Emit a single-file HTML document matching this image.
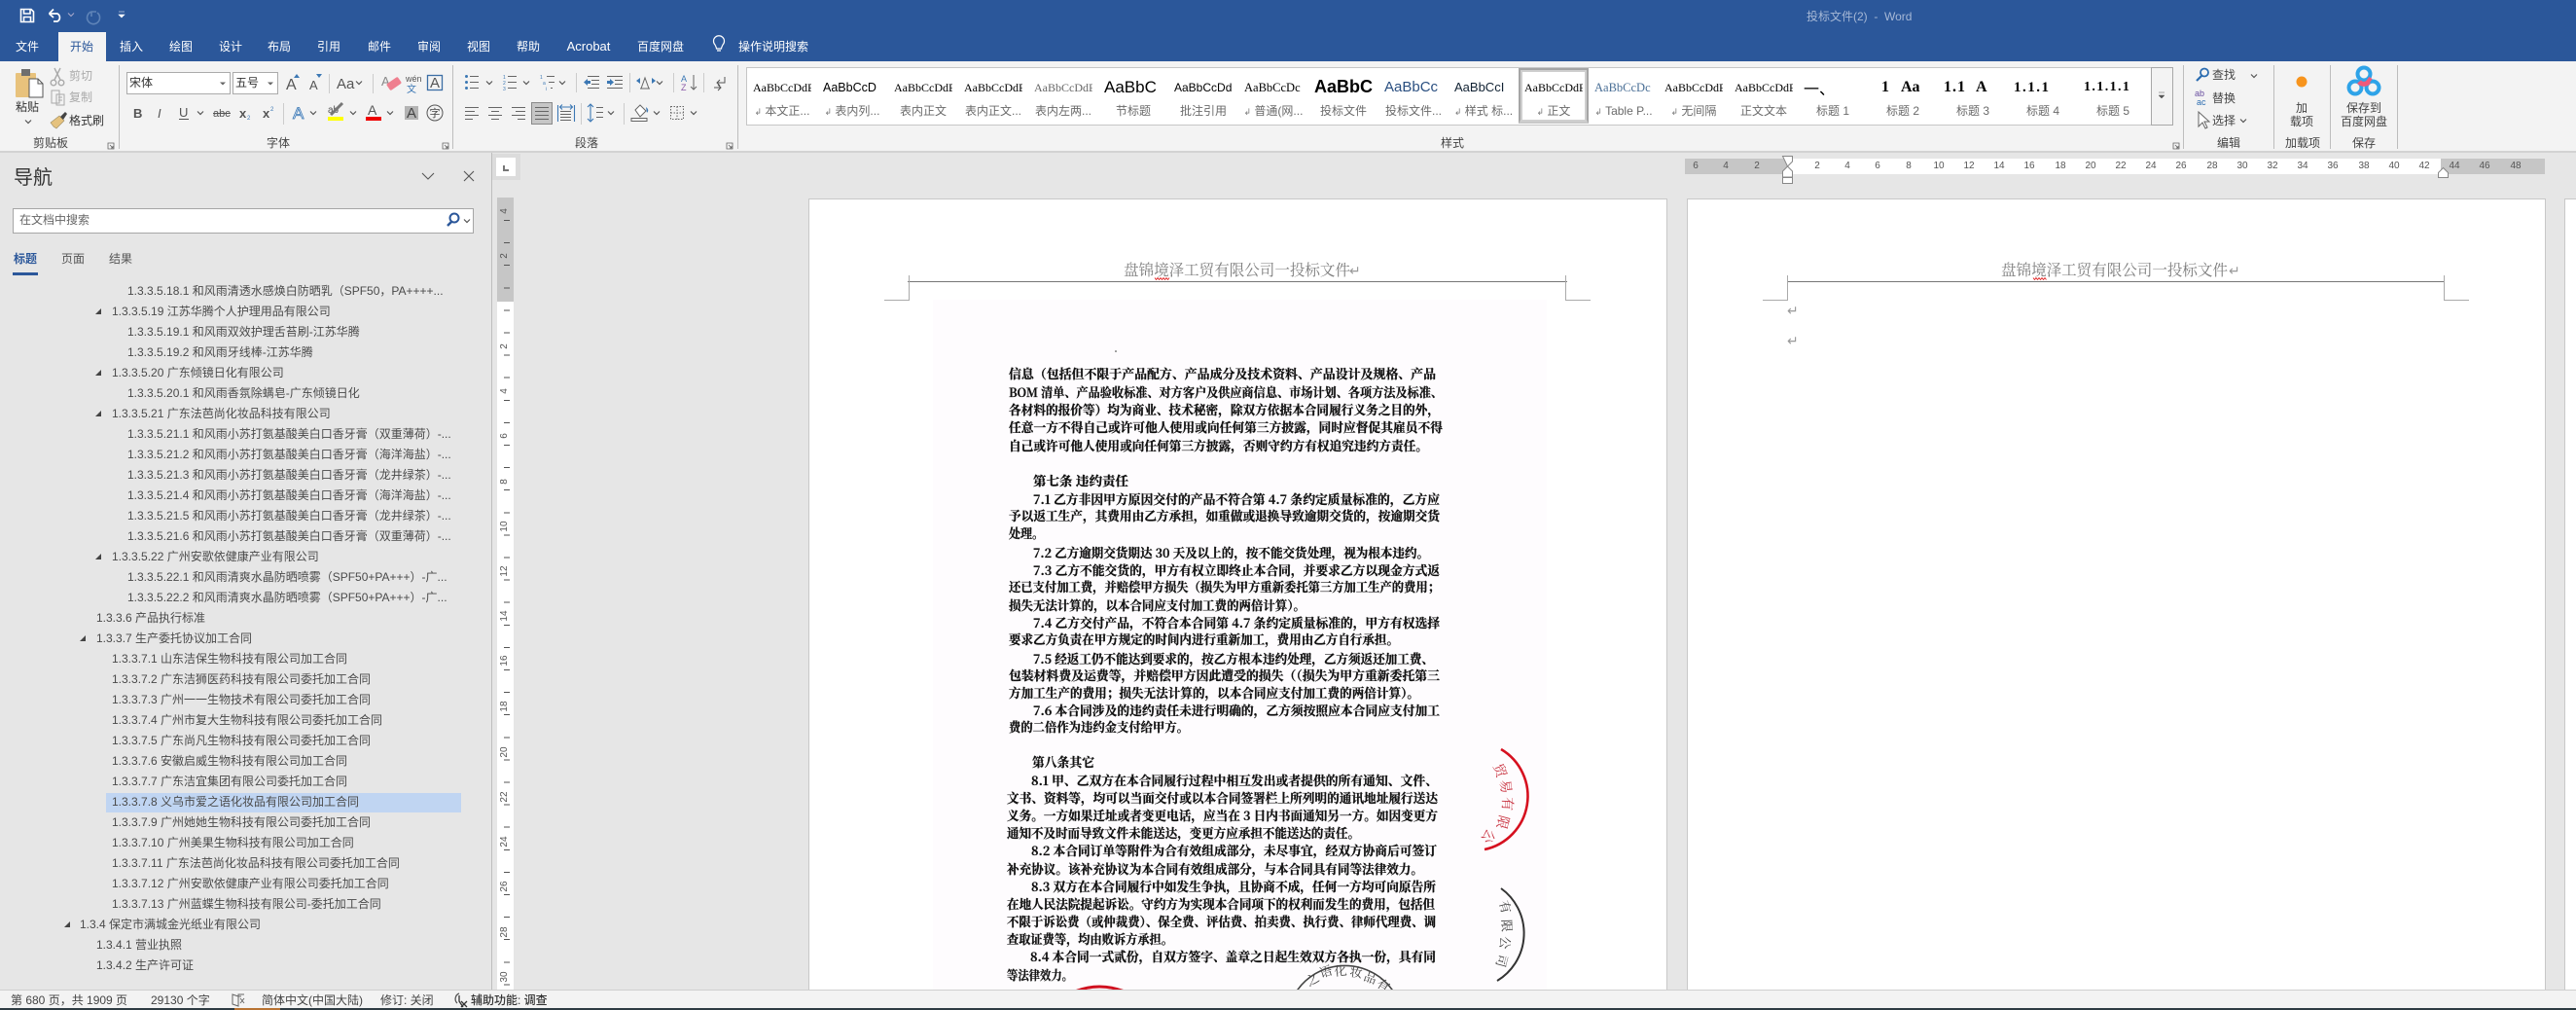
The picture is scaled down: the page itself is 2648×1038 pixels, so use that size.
<!DOCTYPE html>
<html lang="zh-CN"><head><meta charset="utf-8"><title>投标文件(2) - Word</title>
<style>
html,body{margin:0;padding:0;width:2648px;height:1038px;overflow:hidden;background:#e6e6e6;font-family:"Liberation Sans","Noto Sans CJK SC",sans-serif;color:#444}
div,span{position:absolute;box-sizing:border-box}
.t{white-space:nowrap;line-height:14px;font-size:12px}
.c{transform:translateX(-50%)}
.w{color:#fff}
.g{color:#aaa}
.n{white-space:nowrap;line-height:21px;font-size:12px;color:#4a4a4a}
.s{width:60px;height:22px;overflow:hidden;top:79px;white-space:nowrap;line-height:22px;font-family:"Liberation Serif","Noto Serif CJK SC",serif;font-size:12px;color:#000;text-align:left}
.l{top:107px;width:66px;text-align:center;font-size:12px;line-height:14px;color:#6a6a6a;white-space:nowrap}
.a{font-family:"DejaVu Sans",sans-serif;font-size:9px;color:#777}
.rn{font-size:10px;line-height:12px;color:#555;top:165px;transform:translateX(-50%)}
.vn{font-size:10px;line-height:12px;color:#555;left:513px;width:12px;text-align:center;transform:rotate(-90deg)}
.sep{width:1px;top:67px;height:86px;background:#bdbdbd}
svg{position:absolute;left:0;top:0}
</style></head><body>
<div style="left:0;top:0;width:2648px;height:63px;background:#2b579a"></div>
<div style="left:0;top:63px;width:2648px;height:94px;background:#f3f3f3;border-bottom:2px solid #d2d2d2"></div>
<div style="left:60px;top:33px;width:49px;height:30px;background:#f3f3f3"></div>
<span class="t" style="left:1857px;top:10px;color:#a6b8d6">投标文件(2)&nbsp; -&nbsp; Word</span>
<span class="t w c" style="left:28px;top:41px">文件</span>
<span class="t c" style="left:84px;top:41px;color:#2b579a">开始</span>
<span class="t w c" style="left:135px;top:41px">插入</span>
<span class="t w c" style="left:186px;top:41px">绘图</span>
<span class="t w c" style="left:237px;top:41px">设计</span>
<span class="t w c" style="left:287px;top:41px">布局</span>
<span class="t w c" style="left:338px;top:41px">引用</span>
<span class="t w c" style="left:390px;top:41px">邮件</span>
<span class="t w c" style="left:441px;top:41px">审阅</span>
<span class="t w c" style="left:492px;top:41px">视图</span>
<span class="t w c" style="left:543px;top:41px">帮助</span>
<span class="t w c" style="left:605px;top:41px;font-size:13px">Acrobat</span>
<span class="t w c" style="left:679px;top:41px">百度网盘</span>
<span class="t w" style="left:759px;top:41px">操作说明搜索</span>

<!-- ribbon groups -->
<div class="sep" style="left:122px"></div><div class="sep" style="left:465px"></div><div class="sep" style="left:758px"></div>
<div class="sep" style="left:2244px"></div><div class="sep" style="left:2337px"></div><div class="sep" style="left:2395px"></div><div class="sep" style="left:2464px"></div>
<span class="t c" style="left:28px;top:103px;color:#333">粘贴</span>
<span class="t g" style="left:71px;top:71px">剪切</span>
<span class="t g" style="left:71px;top:93px">复制</span>
<span class="t" style="left:71px;top:117px;color:#333">格式刷</span>
<span class="t c" style="left:52px;top:140px">剪贴板</span>
<div style="left:130px;top:74px;width:107px;height:23px;background:#fff;border:1px solid #ababab"></div>
<div style="left:239px;top:74px;width:47px;height:23px;background:#fff;border:1px solid #ababab"></div>
<span class="t" style="left:133px;top:78px;color:#333">宋体</span>
<span class="t" style="left:242px;top:78px;color:#333">五号</span>
<span class="t c" style="left:286px;top:140px">字体</span>
<span class="t c" style="left:603px;top:140px">段落</span>
<span class="t c" style="left:1493px;top:140px">样式</span>
<span class="t c" style="left:2291px;top:140px">编辑</span>
<span class="t c" style="left:2367px;top:140px">加载项</span>
<span class="t c" style="left:2430px;top:140px">保存</span>
<span class="t" style="left:2274px;top:70px">查找</span>
<span class="t" style="left:2274px;top:94px">替换</span>
<span class="t" style="left:2274px;top:117px">选择</span>
<span class="t c" style="left:2366px;top:104px">加</span>
<span class="t c" style="left:2366px;top:118px">载项</span>
<span class="t c" style="left:2430px;top:104px">保存到</span>
<span class="t c" style="left:2430px;top:118px">百度网盘</span>

<!-- style gallery -->
<div style="left:767px;top:69px;width:1467px;height:60px;background:#fff;border:1px solid #c6c6c6"></div>
<div style="left:2211px;top:69px;width:23px;height:60px;background:#f3f3f3;border:1px solid #a8a8a8"></div>
<div style="left:1561px;top:70px;width:72px;height:57px;background:#fff;border:2px solid #a5a5a5;border-bottom:4px solid #c8c8c8;outline:2px solid #cfcfcf;outline-offset:-4px"></div>
<div class="s" style="left:774px">AaBbCcDdE</div>
<div class="s" style="left:846px;font-family:'Liberation Sans';font-size:12.5px">AaBbCcD</div>
<div class="s" style="left:919px">AaBbCcDdE</div>
<div class="s" style="left:991px">AaBbCcDdE</div>
<div class="s" style="left:1063px;color:#666">AaBbCcDdEe</div>
<div class="s" style="left:1135px;font-family:'Liberation Sans';font-size:17px;height:24px">AaBbC</div>
<div class="s" style="left:1207px;font-family:'Liberation Sans';font-size:12px">AaBbCcDd</div>
<div class="s" style="left:1279px;font-size:12.5px">AaBbCcDc</div>
<div class="s" style="left:1351px;font-family:'Liberation Sans';font-weight:bold;font-size:18px;height:26px;top:78px">AaBbC</div>
<div class="s" style="left:1423px;font-family:'Liberation Sans';font-size:15px;color:#2a4f80;height:24px">AaBbCc</div>
<div class="s" style="left:1495px;font-family:'Liberation Sans';font-size:13px;color:#123">AaBbCcI</div>
<div class="s" style="left:1567px">AaBbCcDdE</div>
<div class="s" style="left:1639px;font-size:12.5px;color:#4a6f96">AaBbCcDc</div>
<div class="s" style="left:1711px">AaBbCcDdE</div>
<div class="s" style="left:1783px">AaBbCcDdE</div>
<div class="s" style="left:1854px;font-size:16px;font-family:'Noto Sans CJK SC'">一、</div>
<div class="s" style="left:1926px;font-size:16px;font-weight:bold;height:24px">&nbsp;&nbsp;1&nbsp;&nbsp;&nbsp;Aa</div>
<div class="s" style="left:1998px;font-size:16px;font-weight:bold;letter-spacing:1px;height:24px">1.1 &nbsp;A</div>
<div class="s" style="left:2070px;font-size:15px;font-weight:bold;letter-spacing:1.5px;height:24px">1.1.1</div>
<div class="s" style="left:2142px;font-size:14px;font-weight:bold;letter-spacing:1.4px;height:24px">1.1.1.1</div>
<div class="l" style="left:771px"><span class="a" style="position:static">↲</span> 本文正...</div>
<div class="l" style="left:843px"><span class="a" style="position:static">↲</span> 表内列...</div>
<div class="l" style="left:916px">表内正文</div>
<div class="l" style="left:988px">表内正文...</div>
<div class="l" style="left:1060px">表内左两...</div>
<div class="l" style="left:1132px">节标题</div>
<div class="l" style="left:1204px">批注引用</div>
<div class="l" style="left:1276px"><span class="a" style="position:static">↲</span> 普通(网...</div>
<div class="l" style="left:1348px">投标文件</div>
<div class="l" style="left:1420px">投标文件...</div>
<div class="l" style="left:1492px"><span class="a" style="position:static">↲</span> 样式 标...</div>
<div class="l" style="left:1564px"><span class="a" style="position:static">↲</span> 正文</div>
<div class="l" style="left:1636px"><span class="a" style="position:static">↲</span> Table P...</div>
<div class="l" style="left:1708px"><span class="a" style="position:static">↲</span> 无间隔</div>
<div class="l" style="left:1780px">正文文本</div>
<div class="l" style="left:1851px">标题 1</div>
<div class="l" style="left:1923px">标题 2</div>
<div class="l" style="left:1995px">标题 3</div>
<div class="l" style="left:2067px">标题 4</div>
<div class="l" style="left:2139px">标题 5</div>

<!-- nav pane -->
<div style="left:505px;top:157px;width:1px;height:860px;background:#bdbdbd"></div>
<span class="t" style="left:14px;top:171px;font-size:20px;line-height:24px;color:#333">导航</span>
<div style="left:13px;top:214px;width:474px;height:26px;background:#fff;border:1px solid #a6a6a6"></div>
<span class="t" style="left:20px;top:219px;color:#666">在文档中搜索</span>
<span class="t" style="left:14px;top:259px;color:#2b579a;font-weight:bold">标题</span>
<span class="t" style="left:63px;top:259px;color:#555">页面</span>
<span class="t" style="left:112px;top:259px;color:#555">结果</span>
<div style="left:13px;top:280px;width:26px;height:3px;background:#2b579a"></div>
<div style="left:109px;top:815px;width:365px;height:20px;background:#c0d5f2"></div>
<span class="n" style="left:131px;top:289px">1.3.3.5.18.1 和风雨清透水感焕白防晒乳（SPF50，PA++++...</span>
<span class="n" style="left:115px;top:310px">1.3.3.5.19 江苏华腾个人护理用品有限公司</span>
<span class="n" style="left:131px;top:331px">1.3.3.5.19.1 和风雨双效护理舌苔刷-江苏华腾</span>
<span class="n" style="left:131px;top:352px">1.3.3.5.19.2 和风雨牙线棒-江苏华腾</span>
<span class="n" style="left:115px;top:373px">1.3.3.5.20 广东倾镜日化有限公司</span>
<span class="n" style="left:131px;top:394px">1.3.3.5.20.1 和风雨香氛除螨皂-广东倾镜日化</span>
<span class="n" style="left:115px;top:415px">1.3.3.5.21 广东法芭尚化妆品科技有限公司</span>
<span class="n" style="left:131px;top:436px">1.3.3.5.21.1 和风雨小苏打氨基酸美白口香牙膏（双重薄荷）-...</span>
<span class="n" style="left:131px;top:457px">1.3.3.5.21.2 和风雨小苏打氨基酸美白口香牙膏（海洋海盐）-...</span>
<span class="n" style="left:131px;top:478px">1.3.3.5.21.3 和风雨小苏打氨基酸美白口香牙膏（龙井绿茶）-...</span>
<span class="n" style="left:131px;top:499px">1.3.3.5.21.4 和风雨小苏打氨基酸美白口香牙膏（海洋海盐）-...</span>
<span class="n" style="left:131px;top:520px">1.3.3.5.21.5 和风雨小苏打氨基酸美白口香牙膏（龙井绿茶）-...</span>
<span class="n" style="left:131px;top:541px">1.3.3.5.21.6 和风雨小苏打氨基酸美白口香牙膏（双重薄荷）-...</span>
<span class="n" style="left:115px;top:562px">1.3.3.5.22 广州安歌依健康产业有限公司</span>
<span class="n" style="left:131px;top:583px">1.3.3.5.22.1 和风雨清爽水晶防晒喷雾（SPF50+PA+++）-广...</span>
<span class="n" style="left:131px;top:604px">1.3.3.5.22.2 和风雨清爽水晶防晒喷雾（SPF50+PA+++）-广...</span>
<span class="n" style="left:99px;top:625px">1.3.3.6 产品执行标准</span>
<span class="n" style="left:99px;top:646px">1.3.3.7 生产委托协议加工合同</span>
<span class="n" style="left:115px;top:667px">1.3.3.7.1 山东洁保生物科技有限公司加工合同</span>
<span class="n" style="left:115px;top:688px">1.3.3.7.2 广东洁狮医药科技有限公司委托加工合同</span>
<span class="n" style="left:115px;top:709px">1.3.3.7.3 广州一一生物技术有限公司委托加工合同</span>
<span class="n" style="left:115px;top:730px">1.3.3.7.4 广州市复大生物科技有限公司委托加工合同</span>
<span class="n" style="left:115px;top:751px">1.3.3.7.5 广东尚凡生物科技有限公司委托加工合同</span>
<span class="n" style="left:115px;top:772px">1.3.3.7.6 安徽启威生物科技有限公司加工合同</span>
<span class="n" style="left:115px;top:793px">1.3.3.7.7 广东洁宜集团有限公司委托加工合同</span>
<span class="n" style="left:115px;top:814px">1.3.3.7.8 义乌市爱之语化妆品有限公司加工合同</span>
<span class="n" style="left:115px;top:835px">1.3.3.7.9 广州她她生物科技有限公司委托加工合同</span>
<span class="n" style="left:115px;top:856px">1.3.3.7.10 广州美果生物科技有限公司加工合同</span>
<span class="n" style="left:115px;top:877px">1.3.3.7.11 广东法芭尚化妆品科技有限公司委托加工合同</span>
<span class="n" style="left:115px;top:898px">1.3.3.7.12 广州安歌依健康产业有限公司委托加工合同</span>
<span class="n" style="left:115px;top:919px">1.3.3.7.13 广州蓝蝶生物科技有限公司-委托加工合同</span>
<span class="n" style="left:82px;top:940px">1.3.4 保定市满城金光纸业有限公司</span>
<span class="n" style="left:99px;top:961px">1.3.4.1 营业执照</span>
<span class="n" style="left:99px;top:982px">1.3.4.2 生产许可证</span>

<!-- rulers -->
<div style="left:506px;top:158px;width:29px;height:27px;background:#dcdcdc"></div>
<div style="left:510px;top:162px;width:20px;height:19px;background:#fff"></div>
<div style="left:517px;top:170px;width:2px;height:6px;background:#777"></div><div style="left:517px;top:174px;width:6px;height:2px;background:#777"></div>
<div style="left:511px;top:203px;width:17px;height:107px;background:#c6c6c6"></div>
<div style="left:511px;top:310px;width:17px;height:707px;background:#fff"></div>
<div style="left:518px;top:226px;width:6px;height:791px;background:repeating-linear-gradient(to bottom,#555 0,#555 1px,transparent 1px,transparent 23.1px)"></div>
<span class="vn" style="top:211px">4</span><span class="vn" style="top:257px">2</span>
<span class="vn" style="top:350px">2</span><span class="vn" style="top:396px">4</span><span class="vn" style="top:442px">6</span><span class="vn" style="top:489px">8</span><span class="vn" style="top:535px">10</span><span class="vn" style="top:581px">12</span><span class="vn" style="top:627px">14</span><span class="vn" style="top:673px">16</span><span class="vn" style="top:720px">18</span><span class="vn" style="top:767px">20</span><span class="vn" style="top:813px">22</span><span class="vn" style="top:859px">24</span><span class="vn" style="top:905px">26</span><span class="vn" style="top:952px">28</span><span class="vn" style="top:998px">30</span>

<div style="left:1732px;top:163px;width:884px;height:16px;background:#c6c6c6"></div>
<div style="left:1837px;top:163px;width:672px;height:16px;background:#fff"></div>
<span class="rn" style="left:1743px">6</span><span class="rn" style="left:1774px">4</span><span class="rn" style="left:1806px">2</span>
<span class="rn" style="left:1868px">2</span><span class="rn" style="left:1899px">4</span><span class="rn" style="left:1930px">6</span><span class="rn" style="left:1962px">8</span><span class="rn" style="left:1993px">10</span><span class="rn" style="left:2024px">12</span><span class="rn" style="left:2055px">14</span><span class="rn" style="left:2086px">16</span><span class="rn" style="left:2118px">18</span><span class="rn" style="left:2149px">20</span><span class="rn" style="left:2180px">22</span><span class="rn" style="left:2211px">24</span><span class="rn" style="left:2242px">26</span><span class="rn" style="left:2274px">28</span><span class="rn" style="left:2305px">30</span><span class="rn" style="left:2336px">32</span><span class="rn" style="left:2367px">34</span><span class="rn" style="left:2398px">36</span><span class="rn" style="left:2430px">38</span><span class="rn" style="left:2461px">40</span><span class="rn" style="left:2492px">42</span>
<span class="rn" style="left:2523px">44</span><span class="rn" style="left:2554px">46</span><span class="rn" style="left:2586px">48</span>

<!-- pages -->
<div style="left:831px;top:204px;width:883px;height:813px;background:#fff;border:1px solid #c8c8c8;border-bottom:0;overflow:hidden">
 <div style="left:127px;top:103px;width:631px;height:710px;background:#fefcfe"></div>
 <svg width="2648" height="1038" viewBox="0 0 2648 1038" style="left:-832px;top:-205px" font-family="'Noto Serif CJK SC',serif" font-size="13" font-weight="700" fill="#111" stroke="#111" stroke-width=".3">
  <text x="1037" y="389" textLength="439" lengthAdjust="spacingAndGlyphs">信息（包括但不限于产品配方、产品成分及技术资料、产品设计及规格、产品</text>
  <text x="1037" y="408" textLength="446" lengthAdjust="spacingAndGlyphs">BOM 清单、产品验收标准、对方客户及供应商信息、市场计划、各项方法及标准、</text>
  <text x="1037" y="426" textLength="443" lengthAdjust="spacingAndGlyphs">各材料的报价等）均为商业、技术秘密，除双方依据本合同履行义务之目的外，</text>
  <text x="1037" y="444" textLength="446" lengthAdjust="spacingAndGlyphs">任意一方不得自己或许可他人使用或向任何第三方披露，同时应督促其雇员不得</text>
  <text x="1037" y="463" textLength="431" lengthAdjust="spacingAndGlyphs">自己或许可他人使用或向任何第三方披露，否则守约方有权追究违约方责任。</text>
  <text x="1062" y="499" textLength="98" lengthAdjust="spacingAndGlyphs">第七条 违约责任</text>
  <text x="1062" y="518" textLength="418" lengthAdjust="spacingAndGlyphs">7.1 乙方非因甲方原因交付的产品不符合第 4.7 条约定质量标准的，乙方应</text>
  <text x="1037" y="535" textLength="443" lengthAdjust="spacingAndGlyphs">予以返工生产，其费用由乙方承担，如重做或退换导致逾期交货的，按逾期交货</text>
  <text x="1037" y="553" textLength="36" lengthAdjust="spacingAndGlyphs">处理。</text>
  <text x="1062" y="573" textLength="407" lengthAdjust="spacingAndGlyphs">7.2 乙方逾期交货期达 30 天及以上的，按不能交货处理，视为根本违约。</text>
  <text x="1062" y="591" textLength="418" lengthAdjust="spacingAndGlyphs">7.3 乙方不能交货的，甲方有权立即终止本合同，并要求乙方以现金方式返</text>
  <text x="1037" y="608" textLength="443" lengthAdjust="spacingAndGlyphs">还已支付加工费，并赔偿甲方损失（损失为甲方重新委托第三方加工生产的费用；</text>
  <text x="1037" y="627" textLength="305" lengthAdjust="spacingAndGlyphs">损失无法计算的，以本合同应支付加工费的两倍计算）。</text>
  <text x="1062" y="645" textLength="418" lengthAdjust="spacingAndGlyphs">7.4 乙方交付产品，不符合本合同第 4.7 条约定质量标准的，甲方有权选择</text>
  <text x="1037" y="662" textLength="401" lengthAdjust="spacingAndGlyphs">要求乙方负责在甲方规定的时间内进行重新加工，费用由乙方自行承担。</text>
  <text x="1062" y="682" textLength="412" lengthAdjust="spacingAndGlyphs">7.5 经返工仍不能达到要求的，按乙方根本违约处理，乙方须返还加工费、</text>
  <text x="1037" y="699" textLength="443" lengthAdjust="spacingAndGlyphs">包装材料费及运费等，并赔偿甲方因此遭受的损失（（损失为甲方重新委托第三</text>
  <text x="1037" y="717" textLength="422" lengthAdjust="spacingAndGlyphs">方加工生产的费用；损失无法计算的，以本合同应支付加工费的两倍计算）。</text>
  <text x="1062" y="735" textLength="418" lengthAdjust="spacingAndGlyphs">7.6 本合同涉及的违约责任未进行明确的，乙方须按照应本合同应支付加工</text>
  <text x="1037" y="752" textLength="185" lengthAdjust="spacingAndGlyphs">费的二倍作为违约金支付给甲方。</text>
  <text x="1061" y="788" textLength="64" lengthAdjust="spacingAndGlyphs">第八条其它</text>
  <text x="1060" y="807" textLength="418" lengthAdjust="spacingAndGlyphs">8.1 甲、乙双方在本合同履行过程中相互发出或者提供的所有通知、文件、</text>
  <text x="1035" y="825" textLength="443" lengthAdjust="spacingAndGlyphs">文书、资料等，均可以当面交付或以本合同签署栏上所列明的通讯地址履行送达</text>
  <text x="1035" y="843" textLength="443" lengthAdjust="spacingAndGlyphs">义务。一方如果迁址或者变更电话，应当在 3 日内书面通知另一方。如因变更方</text>
  <text x="1035" y="861" textLength="363" lengthAdjust="spacingAndGlyphs">通知不及时而导致文件未能送达，变更方应承担不能送达的责任。</text>
  <text x="1060" y="879" textLength="417" lengthAdjust="spacingAndGlyphs">8.2 本合同订单等附件为合有效组成部分，未尽事宜，经双方协商后可签订</text>
  <text x="1035" y="898" textLength="428" lengthAdjust="spacingAndGlyphs">补充协议。该补充协议为本合同有效组成部分，与本合同具有同等法律效力。</text>
  <text x="1060" y="916" textLength="416" lengthAdjust="spacingAndGlyphs">8.3 双方在本合同履行中如发生争执，且协商不成，任何一方均可向原告所</text>
  <text x="1035" y="934" textLength="440" lengthAdjust="spacingAndGlyphs">在地人民法院提起诉讼。守约方为实现本合同项下的权利而发生的费用，包括但</text>
  <text x="1035" y="952" textLength="441" lengthAdjust="spacingAndGlyphs">不限于诉讼费（或仲裁费）、保全费、评估费、拍卖费、执行费、律师代理费、调</text>
  <text x="1035" y="970" textLength="171" lengthAdjust="spacingAndGlyphs">查取证费等，均由败诉方承担。</text>
  <text x="1059" y="988" textLength="417" lengthAdjust="spacingAndGlyphs">8.4 本合同一式贰份，自双方签字、盖章之日起生效双方各执一份，具有同</text>
  <text x="1035" y="1007" textLength="68" lengthAdjust="spacingAndGlyphs">等法律效力。</text>
  <g font-weight="400" stroke="none">
   <path d="M1543 770A56 56 0 0 1 1526 873" fill="none" stroke="#d6101f" stroke-width="2.6"/>
   <g fill="#c8303e" font-size="14">
    <text transform="translate(1535,787) rotate(70)">贸</text>
    <text transform="translate(1542,802) rotate(82)">易</text>
    <text transform="translate(1545,819) rotate(92)">有</text>
    <text transform="translate(1542,837) rotate(105)">限</text>
    <text transform="translate(1530,851) rotate(125)">公</text>
   </g>
   <path d="M1543 913A57 57 0 0 1 1539 1008" fill="none" stroke="#333" stroke-width="2"/>
   <g fill="#444" font-size="13">
    <text transform="translate(1541,927) rotate(75)">有</text>
    <text transform="translate(1544,945) rotate(88)">限</text>
    <text transform="translate(1543,962) rotate(95)">公</text>
    <text transform="translate(1541,980) rotate(105)">司</text>
   </g>
   <path d="M1332 1020A60 60 0 0 1 1433 1020" fill="none" stroke="#444" stroke-width="1.6"/>
   <g fill="#444" font-size="13">
    <text transform="translate(1346,1014) rotate(-32)">之</text>
    <text transform="translate(1358,1005) rotate(-18)">语</text>
    <text transform="translate(1372,1003) rotate(-6)">化</text>
    <text transform="translate(1387,1003) rotate(8)">妆</text>
    <text transform="translate(1401,1007) rotate(20)">品</text>
    <text transform="translate(1414,1013) rotate(32)">有</text>
   </g>
   <path d="M1105 1019Q1130 1009 1156 1019" fill="none" stroke="#d0101f" stroke-width="3"/>
   <circle cx="1147" cy="361" r=".8" fill="#333"/>
  </g>
 </svg>
</div>
<div style="left:1734px;top:204px;width:883px;height:813px;background:#fff;border:1px solid #c8c8c8;border-bottom:0"></div>
<div style="left:2636px;top:204px;width:12px;height:813px;background:#fff;border:1px solid #c8c8c8;border-right:0;border-bottom:0"></div>

<!-- status bar -->
<div style="left:0;top:1017px;width:2648px;height:21px;background:#f3f3f3;border-top:1px solid #cfcfcf"></div>
<div style="left:0;top:1036px;width:2648px;height:2px;background:#2e3b42"></div>
<div style="left:241px;top:1036px;width:47px;height:2px;background:#b87333"></div>
<span class="t" style="left:11px;top:1021px;color:#444">第 680 页，共 1909 页</span>
<span class="t" style="left:155px;top:1021px;color:#444">29130 个字</span>
<span class="t" style="left:269px;top:1021px;color:#444">简体中文(中国大陆)</span>
<span class="t" style="left:391px;top:1021px;color:#444">修订: 关闭</span>
<span class="t" style="left:484px;top:1021px;color:#333;font-weight:500">辅助功能: 调查</span>

<!-- icon overlay -->
<svg width="2648" height="1038" viewBox="0 0 2648 1038" font-family="'Liberation Sans','Noto Sans CJK SC',sans-serif">
 <defs><path id="c" d="M-3-1.5 0 1.5 3-1.5" fill="none" stroke="#555" stroke-width="1.2"/><path id="cw" d="M-3-1.5 0 1.5 3-1.5" fill="none" stroke="#aac" stroke-width="1"/>
 <path id="tri" d="M-6 3H0V-3Z" fill="#444"/><path id="dd" d="M-3-1.5H3L0 1.5Z" fill="#666"/>
 <path id="lau" d="M-3-3H3V3H-3ZM-1-1 2 2M2 0V2H0" fill="none" stroke="#666" stroke-width=".8"/></defs>
 <!-- quick access -->
 <path d="M21.5 9.5H32L34.5 12V22.5H21.5ZM24.5 9.5V14H31V9.5M24.5 22.5V17.5H31.5V22.5" fill="none" stroke="#fff" stroke-width="1.6"/>
 <path d="M50.5 14H59A4.5 4.5 0 0 1 59 22H55M50.5 14 55 9.5M50.5 14 55 18" fill="none" stroke="#fff" stroke-width="1.7"/>
 <use href="#cw" x="73" y="15"/>
 <path d="M94 11A6.5 6.5 0 1 0 100 12M94 11V16M94 11H99" fill="none" stroke="#5f84b8" stroke-width="1.6" transform="translate(0,1)"/>
 <path d="M122 12H128M122 15H128L125 18Z" fill="#fff" stroke="#fff" stroke-width=".6"/>
 <path d="M735 50A5.5 5.5 0 1 1 743 50C742 52 741.500 53 741.500 54H736.500C736.500 53 736 52 735 50ZM737 56H741" fill="none" stroke="#fff" stroke-width="1.2" transform="translate(0,-4)"/>
 <!-- clipboard -->
 <rect x="16" y="75" width="21" height="25" rx="1" fill="#e8c27c"/><rect x="22" y="71" width="9" height="7" fill="#6e6e6e"/>
 <path d="M30 81H39L44 86V100H30Z" fill="#fff" stroke="#555"/><path d="M39 81V86H44" fill="none" stroke="#555"/>
 <use href="#c" x="29" y="125"/>
 <g fill="none" stroke="#aaa" stroke-width="1.4"><circle cx="55" cy="85" r="2.800"/><circle cx="63" cy="85" r="2.800"/><path d="M56 82 62 70M62 82 56 70"/></g>
 <path d="M53 93H61V106H53ZM58 97H66V108H58ZM60 100H64M60 103H64" fill="#f3f3f3" stroke="#aaa"/>
 <path d="M55 130 52 126 61 119 66 124 58 132Z" fill="#e5c27e" stroke="#9a8a60" stroke-width=".6"/><path d="M62 120 67 115 69 117 65 123Z" fill="#444"/>
 <use href="#lau" x="114" y="150"/><use href="#lau" x="458" y="150"/><use href="#lau" x="750" y="150"/><use href="#lau" x="2237" y="150"/>
 <use href="#dd" x="229" y="86"/><use href="#dd" x="278" y="86"/>
 <!-- font row 1 -->
 <g fill="#555">
  <text x="294" y="92" font-size="16">A</text><path d="M302 80 305 76 308 80Z" fill="#3c78b4"/>
  <text x="318" y="92" font-size="13">A</text><path d="M325 76H331L328 80Z" fill="#3c78b4"/>
  <text x="346" y="91" font-size="15">Aa</text>
  <text x="417" y="84" font-size="9">wén</text>
  <text x="418" y="95" font-size="10" fill="#3c78b4">文</text>
  <text x="442" y="90" font-size="15">A</text>
  <text x="392" y="88" font-size="13" fill="#888">A</text>
 </g>
 <rect x="439.500" y="77.500" width="15" height="15" fill="none" stroke="#3c6ea5" stroke-width="1.3"/>
 <rect x="398" y="82" width="14" height="8" rx="1.500" transform="rotate(-35 405 86)" fill="#ef7f8f"/>
 <use href="#c" x="369" y="85"/>
 <rect x="338" y="76" width="1" height="20" fill="#ccc"/><rect x="383" y="76" width="1" height="20" fill="#ccc"/>
 <!-- font row 2 -->
 <g fill="#555" font-size="13">
  <text x="137" y="121" font-weight="bold">B</text><text x="162" y="121" font-style="italic">I</text>
  <text x="184" y="120">U</text><rect x="184" y="122" width="10" height="1" />
  <text x="219" y="120" font-size="11">abc</text><rect x="219" y="116" width="18" height="1"/>
  <text x="246" y="121" font-weight="bold">x</text><text x="254" y="123" font-size="6" fill="#3c78b4">2</text>
  <text x="270" y="121" font-weight="bold">x</text><text x="278" y="114" font-size="6" fill="#3c78b4">2</text>
  <text x="337" y="116" font-size="10">ab</text>
  <text x="378" y="118" font-size="14">A</text>
  <text x="441.500" y="120" font-size="11" fill="#444">字</text>
 </g>
 <use href="#c" x="206" y="116"/><use href="#c" x="322" y="116"/><use href="#c" x="363" y="116"/><use href="#c" x="401" y="116"/>
 <rect x="291" y="106" width="1" height="22" fill="#ccc"/>
 <text x="301" y="122" font-size="17" fill="#e8f0fa" stroke="#3c78b4" stroke-width=".8">A</text>
 <path d="M340 118 352 106" stroke="#777" stroke-width="3"/>
 <rect x="337" y="120" width="16" height="4" fill="#ff0"/><rect x="376" y="120" width="16" height="4" fill="#e00"/>
 <rect x="416" y="109" width="14" height="14" fill="#b3b3b3"/>
 <text x="418" y="121" font-size="15" fill="#444">A</text>
 <circle cx="447" cy="116" r="8" fill="none" stroke="#555"/>
 <!-- paragraph row 1 -->
 <g stroke="#666" stroke-width="1" fill="none">
  <path d="M483 78.500H492M483 84.500H492M483 90.500H492"/>
  <path d="M522 78.500H531M522 84.500H531M522 90.500H531"/>
  <path d="M562 78.500H570M564 84.500H570M566 90.500H568"/>
  <path d="M604 78.500H616M608 82.500H616M608 86.500H616M604 90.500H616"/>
  <path d="M624 78.500H640M632 82.500H640M632 86.500H640M624 90.500H640"/>
  <path d="M658 91H668M659 91 663 80 667 91"/>
 </g>
 <g fill="#3c78b4">
  <circle cx="479.500" cy="78.500" r="1.500"/><circle cx="479.500" cy="84.500" r="1.500"/><circle cx="479.500" cy="90.500" r="1.500"/>
  <text x="517" y="81" font-size="5">1</text><text x="517" y="87" font-size="5">2</text><text x="517" y="93" font-size="5">3</text>
  <text x="555" y="81" font-size="5">1</text><text x="558" y="87" font-size="5">a</text><text x="561" y="93" font-size="5">i</text>
  <path d="M600 84.500 604 81V83H607V86H604V88Z"/><path d="M631 84.500 627 81V83H624V86H627V88Z"/>
  <path d="M654 83 658 80V86ZM674 83 670 80V86Z"/>
  <text x="700" y="84" font-size="9">A</text>
 </g>
 <text x="700" y="93" font-size="9" fill="#8a5aa8">Z</text>
 <path d="M713 77V92M710 89 713 92 716 89" fill="none" stroke="#666"/>
 <path d="M745 79V85H737M740 82 737 85 740 88" fill="none" stroke="#555"/><path d="M734 90H741M738 87 741 90 738 93" fill="none" stroke="#555"/>
 <use href="#c" x="503" y="85"/><use href="#c" x="541" y="85"/><use href="#c" x="578" y="85"/><use href="#c" x="678" y="85"/>
 <rect x="592" y="75" width="1" height="20" fill="#ccc"/><rect x="647" y="75" width="1" height="20" fill="#ccc"/><rect x="692" y="75" width="1" height="20" fill="#ccc"/><rect x="723" y="75" width="1" height="20" fill="#ccc"/>
 <!-- paragraph row 2 -->
 <rect x="546.500" y="105.500" width="21" height="22" fill="#c6c6c6" stroke="#8a8a8a"/>
 <g stroke="#666" stroke-width="1" fill="none">
  <path d="M478 110.500H492M478 114.500H488M478 118.500H492M478 122.500H486"/>
  <path d="M502 110.500H516M505 114.500H513M502 118.500H516M505 122.500H513"/>
  <path d="M526 110.500H540M530 114.500H540M526 118.500H540M532 122.500H540"/>
  <path d="M550 110.500H564M550 114.500H564M550 118.500H564M550 122.500H564"/>
  <path d="M576 114.500H587M576 117.500H587M576 120.500H587M576 123.500H587"/>
  <path d="M613 110.500H620M613 115.500H620M613 120.500H620"/>
  <path d="M649 121.500H665V124.500H649Z"/>
  <path d="M653 113 658 108 664 114 658 120Z" fill="#fff"/>
  <path d="M689.500 109.500H702.500V122.500H689.500ZM696 109.500V122.500M689.500 116H702.500" stroke-dasharray="1.500 1.500"/>
 </g>
 <path d="M573.500 108V125M590.500 108V125M576 110H588M578 107.500 575.500 110 578 112.500M586 107.500 588.500 110 586 112.500" fill="none" stroke="#3c78b4" stroke-width="1.1"/>
 <path d="M607 107V125M604 110 607 107 610 110M604 122 607 125 610 122" fill="none" stroke="#3c78b4" stroke-width="1.1"/>
 <path d="M664 110Q668 113 665 116Z" fill="#3c78b4"/>
 <use href="#c" x="628" y="116"/><use href="#c" x="675" y="116"/><use href="#c" x="713" y="116"/>
 <rect x="597" y="106" width="1" height="22" fill="#ccc"/><rect x="641" y="106" width="1" height="22" fill="#ccc"/>
 <!-- gallery more -->
 <path d="M2219 95H2225M2219 98H2225L2222 101Z" fill="#555" stroke="#555" stroke-width=".5"/>
 <!-- edit -->
 <circle cx="2266" cy="74.500" r="4" fill="none" stroke="#2b6cb0" stroke-width="1.800"/><path d="M2263 78 2258 83" stroke="#2b6cb0" stroke-width="2.200"/>
 <use href="#c" x="2317" y="78"/>
 <text x="2256" y="99" font-size="9" fill="#6a4fa0">ab</text><text x="2258" y="108" font-size="9" fill="#2b6cb0">ac</text>
 <path d="M2260 115V130L2264 126 2267 132 2269 131 2266 125H2271Z" fill="#fff" stroke="#666"/>
 <use href="#c" x="2306" y="124"/>
 <!-- add-ins / baidu -->
 <circle cx="2366" cy="84" r="5.500" fill="#f7941d"/>
 <g fill="none" stroke-width="4"><circle cx="2430" cy="76" r="6.500" stroke="#2ea3e8"/><circle cx="2421" cy="90" r="6.500" stroke="#2ea3e8"/><circle cx="2439" cy="90" r="6.500" stroke="#2ea3e8"/><path d="M2425 84A6.500 6.500 0 0 0 2435 84" stroke="#ef5a7a" stroke-width="5"/><path d="M2432 87 2437 80" stroke="#ef5a7a"/></g>
 <!-- nav -->
 <path d="M434 178 440 184 446 178" fill="none" stroke="#555" stroke-width="1.100"/><path d="M477 176 487 186M487 176 477 186" fill="none" stroke="#555" stroke-width="1.100"/>
 <circle cx="467" cy="224" r="4.500" fill="none" stroke="#2b579a" stroke-width="2"/><path d="M464 228 460 232" stroke="#2b579a" stroke-width="2.500"/>
 <use href="#c" x="480" y="227"/>
 <use href="#tri" x="104" y="320"/><use href="#tri" x="104" y="383"/><use href="#tri" x="104" y="425"/><use href="#tri" x="104" y="572"/><use href="#tri" x="88" y="656"/><use href="#tri" x="72" y="950"/>
 <!-- ruler markers -->
 <path d="M1832.500 160.500H1842.500V166L1837.500 171ZM1837.500 171 1842.500 176V182H1832.500V176Z" fill="#fff" stroke="#888"/><rect x="1832.500" y="182.500" width="10" height="6" fill="#fff" stroke="#888"/>
 <path d="M2506.500 182.500V177.500L2511.500 172.500 2516.500 177.500V182.500Z" fill="#fff" stroke="#888"/>
 <!-- page 1 header -->
 <g font-family="'Noto Serif CJK SC',serif" font-size="16" fill="#7d7d7d">
  <text x="1155" y="283" textLength="233" lengthAdjust="spacingAndGlyphs">盘锦境泽工贸有限公司一投标文件</text>
  <text x="2057" y="283" textLength="233" lengthAdjust="spacingAndGlyphs">盘锦境泽工贸有限公司一投标文件</text>
 </g>
 <g font-family="'DejaVu Sans',sans-serif" font-size="14" fill="#999">
  <text x="1387" y="283">↵</text><text x="2291" y="283">↵</text><text x="1837" y="324">↵</text><text x="1837" y="355">↵</text>
 </g>
 <path d="M1187 285.500l1.500 2 1.500-2 1.500 2 1.500-2 1.500 2 1.500-2 1.500 2 1.500-2 1.500 2 1.500-2M2090 285.500l1.500 2 1.500-2 1.500 2 1.500-2 1.500 2 1.500-2 1.500 2 1.500-2 1.500 2" fill="none" stroke="#e01010" stroke-width=".8"/>
 <rect x="933" y="289" width="678" height="1" fill="#777"/><rect x="1837" y="289" width="676" height="1" fill="#777"/>
 <path d="M934.500 283V308.500H909M1609.500 283V308.500H1635M1837.500 283V308.500H1812M2512.500 283V308.500H2538" fill="none" stroke="#aaa"/>
 <!-- status icons -->
 <path d="M239 1022 245 1024V1034L239 1032ZM245 1024H248M245 1034V1022H251" fill="none" stroke="#666"/><path d="M247 1026 251 1031M251 1026 247 1031" stroke="#666"/>
 <path d="M472 1021A6 6 0 0 0 470 1031" fill="none" stroke="#555" stroke-width="1.300"/><path d="M472 1023V1029L476 1035M474 1029 480 1035M480 1029 474 1035" fill="none" stroke="#333" stroke-width="1.300"/>
</svg>
</body></html>
